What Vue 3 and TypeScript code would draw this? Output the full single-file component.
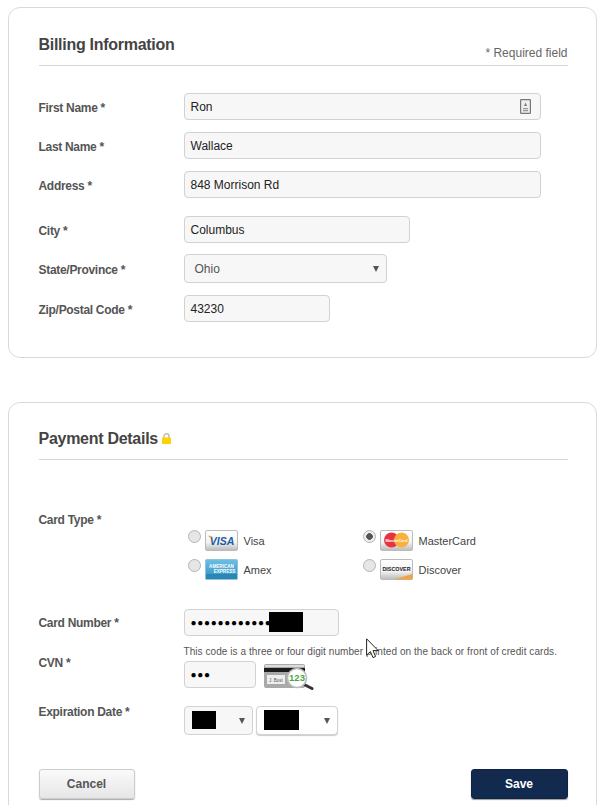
<script setup lang="ts">
// billing + payment form, values are static
const billing = [
  { label: 'First Name *', value: 'Ron', cls: 'r-first' },
  { label: 'Last Name *', value: 'Wallace', cls: 'r-last' },
  { label: 'Address *', value: '848 Morrison Rd', cls: 'r-addr' },
]
</script>

<template>
  <div class="page">
    <section class="card billing">
      <header class="head">
        <h2>Billing Information</h2>
        <span class="req">* Required field</span>
      </header>

      <div class="rows">
        <div v-for="row in billing" :key="row.label" class="row" :class="row.cls">
          <label>{{ row.label }}</label>
          <div class="field wide">
            {{ row.value }}
            <svg v-if="row.cls === 'r-first'" class="contact" width="11" height="15" viewBox="0 0 11 15">
              <rect x=".6" y=".6" width="9.8" height="13.8" rx=".6" fill="#eee" stroke="#777" stroke-width="1.2" />
              <path d="M5.5 3.4 7 7H4z" fill="#777" />
              <path d="M3 9h5v1.2H3zM3 11h5v1.2H3z" fill="#999" />
            </svg>
          </div>
        </div>
        <div class="row r-city">
          <label>City *</label>
          <div class="field city">Columbus</div>
        </div>
        <div class="row r-state">
          <label>State/Province *</label>
          <div class="field select state"><span class="ohio">Ohio</span><i class="caret"></i></div>
        </div>
        <div class="row r-zip">
          <label>Zip/Postal Code *</label>
          <div class="field zip">43230</div>
        </div>
      </div>
    </section>

    <section class="card payment">
      <header class="head pay-head">
        <h2>Payment Details</h2>
        <svg class="lock" width="9" height="11" viewBox="0 0 9 11">
          <path d="M2 5V3.2a2.5 2.5 0 0 1 5 0V5" fill="none" stroke="#b9b9a0" stroke-width="1.3" />
          <rect y="4.4" width="9" height="6.6" rx=".8" fill="#fcd200" />
        </svg>
      </header>

      <div class="type-row">
        <label>Card Type *</label>
        <div class="types">
          <div class="opt">
            <i class="radio"></i>
            <svg class="logo" viewBox="0 0 33 21">
              <defs>
                <linearGradient id="silver" x1="0" y1="0" x2="0" y2="1">
                  <stop offset="0" stop-color="#fff" /><stop offset=".6" stop-color="#f2f2f2" /><stop offset="1" stop-color="#b9b9b9" />
                </linearGradient>
                <linearGradient id="blue" x1="0" y1="0" x2="0" y2="1">
                  <stop offset="0" stop-color="#6cc0e4" /><stop offset="1" stop-color="#2f8fc0" />
                </linearGradient>
              </defs>
              <rect x=".5" y=".5" width="32" height="20" rx="1.5" fill="url(#silver)" stroke="#bbb" />
              <text x="17" y="15" text-anchor="middle" class="t-visa">VISA</text>
              <path d="M3 5.5l4.5 1-2.5 1.5z" fill="#f0a93a" />
            </svg>
            <span>Visa</span>
          </div>
          <div class="opt">
            <i class="radio on"></i>
            <svg class="logo" viewBox="0 0 33 21">
              <rect x=".5" y=".5" width="32" height="20" rx="1.5" fill="url(#silver)" stroke="#bbb" />
              <circle cx="11.5" cy="10" r="7.5" fill="#e5333f" />
              <circle cx="21.5" cy="10" r="7.5" fill="#fbb03b" />
              <text x="16.5" y="11.5" text-anchor="middle" class="t-mc">MasterCard</text>
            </svg>
            <span>MasterCard</span>
          </div>
          <div class="opt">
            <i class="radio"></i>
            <svg class="logo" viewBox="0 0 33 21">
              <rect x=".5" y=".5" width="32" height="20" rx="1" fill="url(#blue)" stroke="#8fc4dd" />
              <path d="M1 15h31v5H1z" fill="#2a86b6" />
              <text x="16.5" y="8.5" text-anchor="middle" class="t-amex">AMERICAN</text>
              <text x="19.5" y="14" text-anchor="middle" class="t-amex">EXPRESS</text>
            </svg>
            <span>Amex</span>
          </div>
          <div class="opt">
            <i class="radio"></i>
            <svg class="logo" viewBox="0 0 33 21">
              <rect x=".5" y=".5" width="32" height="20" rx="1.5" fill="url(#silver)" stroke="#bbb" />
              <path d="M14 20.4 32.4 15v5.4z" fill="#f0a545" />
              <text x="16.5" y="12" text-anchor="middle" class="t-disc">DISCOVER</text>
            </svg>
            <span>Discover</span>
          </div>
        </div>
      </div>

      <div class="row r-card">
        <label>Card Number *</label>
        <div class="field card-no">
          <span class="dots">●●●●●●●●●●●●</span>
          <b class="black b-card"></b>
        </div>
      </div>
      <p class="hint">This code is a three or four digit number printed on the back or front of credit cards.</p>
      <div class="row r-cvn">
        <label>CVN *</label>
        <div class="field cvn"><span class="dots">●●●</span></div>
        <svg class="cvn-img" width="50" height="28" viewBox="0 0 50 28">
          <rect x="0" y="0" width="41" height="24" rx="2" fill="#a9a9a9" />
          <rect x="1" y="1" width="39" height="2" fill="#ddd" />
          <rect x="0" y="4" width="41" height="4" fill="#1c1c1c" />
          <rect x="3" y="11" width="18" height="9" fill="#eee" />
          <text x="12" y="18" text-anchor="middle" class="t-sig">J. Bost</text>
          <path d="M39 20l9 4.5" stroke="#333" stroke-width="3" stroke-linecap="round" />
          <circle cx="33" cy="14" r="9.5" fill="#fff" stroke="#bbb" stroke-width="1.6" />
          <text x="33" y="17.3" text-anchor="middle" class="t-123">123</text>
        </svg>
      </div>
      <div class="row r-exp">
        <label>Expiration Date *</label>
        <div class="exp">
          <div class="field select month"><b class="black b-month"></b><i class="caret"></i></div>
          <div class="field select year"><b class="black b-year"></b><i class="caret"></i></div>
        </div>
      </div>

      <div class="actions">
        <button class="btn cancel" type="button">Cancel</button>
        <button class="btn save" type="button">Save</button>
      </div>
    </section>

    <svg class="cursor" width="13" height="21" viewBox="0 0 13 21">
      <path d="M.6.8v16.4l3.8-3.6 2.6 6 2.6-1.1-2.6-5.9h5.2z" fill="#fff" stroke="#222" stroke-width="1" />
    </svg>
  </div>
</template>

<style>
html, body { margin: 0; background: #fff; }
</style>

<style scoped>
.page {
  position: relative;
  width: 605px;
  height: 805px;
  overflow: hidden;
  box-sizing: border-box;
  padding: 7px 8px 0 8px;
  font-family: "Liberation Sans", Arial, sans-serif;
  color: #555;
}
.card {
  box-sizing: border-box;
  border: 1.5px solid #d9d9d9;
  border-radius: 12px;
  padding: 0 28.5px 0 29.5px;
  background: #fff;
}
.billing { height: 351px; }
.payment { height: 440px; margin-top: 44px; }

.head {
  display: flex;
  justify-content: space-between;
  align-items: flex-end;
  height: 58px;
  padding-bottom: 5px;
  box-sizing: border-box;
  border-bottom: 1px solid #d5d5d5;
}
.head h2 {
  margin: 0 0 5px;
  font-size: 16px;
  line-height: 20px;
  letter-spacing: -0.28px;
  font-weight: bold;
  color: #444;
}
.req { font-size: 12px; line-height: 14px; color: #666; }
.pay-head { justify-content: flex-start; gap: 4px; height: 57px; padding-bottom: 8px; }
.pay-head h2 { margin-bottom: 2px; }
.lock { margin-bottom: 7px; }

.rows { padding-top: 27px; }
.row { display: flex; align-items: center; }
.row label, .type-row label {
  flex: none;
  width: 145px;
  font-size: 12px;
  letter-spacing: -0.3px;
  font-weight: bold;
  color: #555;
}
.row label { padding-top: 2px; }
.type-row label { padding-top: 1px; }
.r-last, .r-addr { margin-top: 12px; }
.r-city { margin-top: 18px; }
.r-state { margin-top: 11px; }
.r-zip { margin-top: 12px; }

.field {
  position: relative;
  box-sizing: border-box;
  display: flex;
  align-items: center;
  height: 27px;
  padding: 0 6px;
  border: 1px solid #d2d2d2;
  border-radius: 4px;
  background: #f7f7f7;
  font-size: 12px;
  color: #222;
}
.wide { width: 357px; }
.city { width: 226px; }
.state { width: 203px; height: 29px; padding-left: 10px; }
.zip { width: 146px; }
.ohio { color: #555; }
.contact { position: absolute; right: 9px; top: 5px; }

.caret {
  position: absolute;
  right: 7px;
  top: 50%;
  margin-top: -3px;
  width: 0;
  height: 0;
  border-left: 3px solid transparent;
  border-right: 3px solid transparent;
  border-top: 6px solid #555;
}

.type-row { display: flex; margin-top: 52px; }
.types {
  display: grid;
  grid-template-columns: 175px 175px;
  row-gap: 8px;
  margin-top: 18px;
  margin-left: 4px;
}
.opt { display: flex; align-items: center; height: 21px; font-size: 11px; color: #444; }
.radio {
  box-sizing: border-box;
  width: 13px;
  height: 13px;
  margin: -8px 4px 0 0;
  border: 1px solid #b4b4b4;
  border-radius: 50%;
  background: #e6e6e6;
}
.radio.on { background: radial-gradient(circle, #555 0 3px, #eee 3.6px); }
.logo { width: 33px; height: 21px; margin-right: 6px; flex: none; }
.t-visa { font: italic bold 10.5px "Liberation Sans", sans-serif; fill: #1b5c9e; }
.t-mc { font: bold 4px "Liberation Sans", sans-serif; fill: #fff; }
.t-amex { font: bold 4.6px "Liberation Sans", sans-serif; fill: #fff; }
.t-disc { font: bold 5.4px "Liberation Sans", sans-serif; fill: #222; }
.t-sig { font: 4.5px "Liberation Sans", sans-serif; fill: #555; }
.t-123 { font: bold 9.5px "Liberation Sans", sans-serif; fill: #4aa844; }

.r-card { margin-top: 29px; }
.r-card label { padding-top: 0; }
.card-no { width: 155px; }
.dots { font-size: 10px; letter-spacing: 0.7px; color: #000; }
.black { position: absolute; display: block; background: #000; }
.b-card { left: 84px; top: 2px; width: 34px; height: 20px; }
.hint {
  margin: 10px 0 0 145px;
  font-size: 10px;
  line-height: 12px;
  letter-spacing: 0.07px;
  color: #555;
  white-space: nowrap;
}
.r-cvn { margin-top: 3px; align-items: flex-start; }
.r-cvn label { margin-top: -5px; padding-top: 0; }
.cvn { width: 72px; }
.cvn-img { margin: 3px 0 0 8px; }
.r-exp { margin-top: 14px; }
.r-exp label { align-self: flex-start; margin-top: -1px; padding-top: 0; }
.exp { display: flex; gap: 3px; }
.month { width: 69px; height: 29px; }
.year { width: 82px; height: 29px; box-shadow: 0 1px 1px #ccc; background: #fff; }
.b-month { left: 7px; top: 4px; width: 24px; height: 18px; }
.b-year { left: 7px; top: 3px; width: 35px; height: 20px; }

.actions { display: flex; justify-content: space-between; margin-top: 34px; }
.btn {
  width: 97px;
  height: 30px;
  border-radius: 3px;
  font: bold 12px "Liberation Sans", Arial, sans-serif;
  cursor: pointer;
}
.cancel {
  width: 96px;
  border: 1px solid #ccc;
  background: linear-gradient(#fafafa, #e6e6e6);
  box-shadow: 0 1px 1px #aaa;
  color: #555;
}
.save {
  border: 1px solid #0e2342;
  background: linear-gradient(#14294e, #102a4f);
  box-shadow: 0 1px 1px #999;
  color: #fff;
}
.cursor { position: absolute; left: 366px; top: 638px; }
</style>
